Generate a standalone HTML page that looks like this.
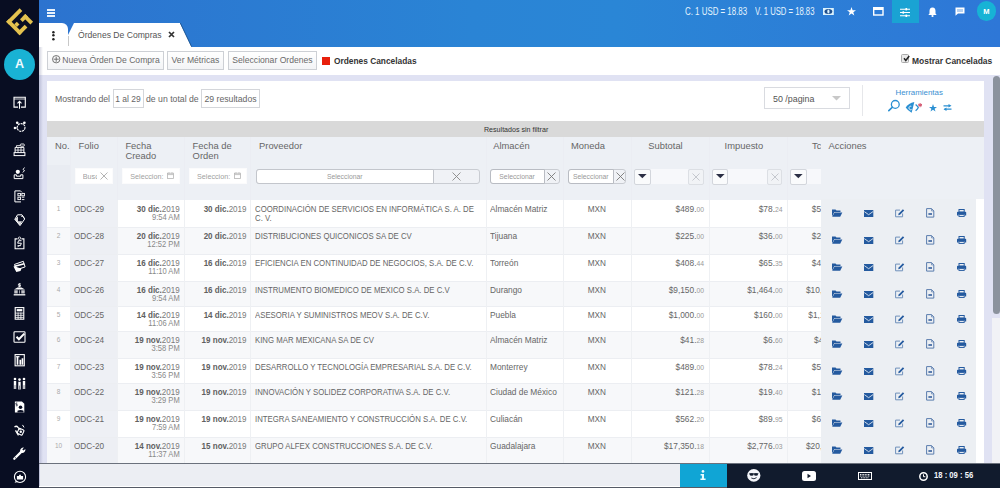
<!DOCTYPE html><html><head><meta charset="utf-8"><style>
*{box-sizing:border-box;margin:0;padding:0}
html,body{width:1000px;height:488px;overflow:hidden}
body{position:relative;background:#e0e2f3;font-family:"Liberation Sans",sans-serif;color:#555}
.a{position:absolute}
.t{position:absolute;white-space:nowrap;line-height:1}
svg{position:absolute;overflow:visible}
.btn{position:absolute;top:51px;height:19px;border:1px solid #cdd0d5;background:linear-gradient(#fff,#f3f4f6);font-size:8.6px;color:#6a6a6a;line-height:17px;white-space:nowrap;text-align:center}
.hd{position:absolute;font-size:9.4px;color:#666;line-height:10px;white-space:nowrap}
.cell{position:absolute;white-space:nowrap;line-height:1}
.pv{font-size:7.8px;color:#666}
.dt{font-size:8px;color:#7a7a7a;text-align:right}
.dt b{font-weight:700;color:#606060}
.tm{font-size:7.3px;color:#888;text-align:right}
.mn{font-size:8.4px;color:#666;text-align:right}
.mn s{text-decoration:none;font-size:8px;color:#999}
.sb{position:absolute;left:0;width:39px;height:23px}
.fi{position:absolute;height:15.5px;background:#fff;border:1px solid #fbfbfc;font-size:7.2px;color:#a0a0a0;line-height:15px;white-space:nowrap;overflow:hidden}
</style></head><body>
<div class="a" style="left:0;top:0;width:39px;height:488px;background:#080d22"></div>
<svg style="left:0;top:0" width="39" height="44" viewBox="0 0 39 44">
<g transform="translate(6.2 21.75) rotate(-45)" fill="#e4c24f">
<rect x="0" y="0" width="19" height="3.8"/>
<rect x="0" y="0" width="3.8" height="19"/>
<rect x="0" y="15.2" width="11" height="3.8"/>
<rect x="3.8" y="7.5" width="3.7" height="3.8"/>
<rect x="11.5" y="8" width="7.5" height="3.8"/>
<rect x="15.2" y="8" width="3.8" height="11"/>
</g></svg>
<div class="a" style="left:4px;top:48.5px;width:31px;height:31px;border-radius:50%;background:#19b2d4"></div>
<div class="t" style="left:4px;top:58.3px;width:31px;text-align:center;font-size:12.6px;font-weight:700;color:#eefaff">A</div>
<svg style="left:0;top:0" width="39" height="488"><g transform="translate(19.5 102.8)"><path d="M-1.5 4.3H-5.5V-5.5H5.8V4.3H1.5" fill="none" stroke="#fff" stroke-width="1.1"/><path d="M-5.5 -3.8H5.8" stroke="#fff" stroke-width="0.8"/><path d="M0 6V-1.3M-2 0.6L0 -1.4L2 0.6" stroke="#fff" stroke-width="1.1" fill="none"/></g></svg>
<svg style="left:0;top:0" width="39" height="488"><g transform="translate(19.5 126.2)"><circle cx="1.6" cy="1.3" r="3.9" fill="none" stroke="#fff" stroke-width="1.1" stroke-dasharray="2.2 0.7"/><circle cx="-2.3" cy="-3.4" r="1.3" fill="#fff"/><circle cx="4.9" cy="-3.4" r="1.3" fill="#fff"/><circle cx="-4.6" cy="1.8" r="1.2" fill="#fff"/><path d="M-2.3 -3.4L-0.8 -2M4.9 -3.4L3.8 -2.1M-4.6 1.8H-2.3" stroke="#fff" stroke-width="0.8"/></g></svg>
<svg style="left:0;top:0" width="39" height="488"><g transform="translate(19.5 149.6)"><rect x="-5.4" y="3" width="10.8" height="3" fill="none" stroke="#fff" stroke-width="1"/><path d="M-4.4 3V-2.2H4.4V3" fill="none" stroke="#fff" stroke-width="1"/><path d="M-1.5 -2.2V3M1.5 -2.2V3M-4.4 0.5H4.4" stroke="#fff" stroke-width="0.8"/><rect x="0.8" y="-5.6" width="4" height="2.2" rx="0.8" fill="none" stroke="#fff" stroke-width="0.9"/><path d="M-3 -2.2V-4H0.8" stroke="#fff" stroke-width="0.8" fill="none"/></g></svg>
<svg style="left:0;top:0" width="39" height="488"><g transform="translate(19.5 173.0)"><circle cx="-1.7" cy="-1.2" r="2.1" fill="#fff"/><path d="M-5.3 1.8V5.6H3.4V1.8H1.2V3.2H-3.1V1.8Z" fill="none" stroke="#fff" stroke-width="1"/><path d="M5 -5.5L3.5 -3.5L5 -2.5L3.3 -0.5" stroke="#fff" stroke-width="0.9" fill="none"/></g></svg>
<svg style="left:0;top:0" width="39" height="488"><g transform="translate(19.5 196.4)"><path d="M1 -5.5H-4.6V5.5H1.5" fill="none" stroke="#fff" stroke-width="1"/><path d="M1 -5.5L2.5 -4" stroke="#fff" stroke-width="0.8"/><rect x="-1.6" y="-3" width="2.6" height="2.4" fill="none" stroke="#fff" stroke-width="0.9"/><rect x="2.3" y="-3" width="2.6" height="2.4" fill="none" stroke="#fff" stroke-width="0.9"/><rect x="-1.6" y="0.8" width="2.6" height="2.4" fill="none" stroke="#fff" stroke-width="0.9"/><path d="M2.3 0.8H4.9M2.3 3.2H4.9" stroke="#fff" stroke-width="0.9"/></g></svg>
<svg style="left:0;top:0" width="39" height="488"><g transform="translate(19.5 219.8)"><path d="M-4.7 -0.5L-2 -5H2.5L5.2 -0.8L0.5 5.8Z" fill="none" stroke="#fff" stroke-width="1"/><path d="M-4.7 -0.5L0.5 5.8L2.5 1.5H-1.5V-3.5Z" fill="#fff" opacity="0.85"/><path d="M1.5 -3.5H3.5L5.2 -0.8" stroke="#fff" stroke-width="0.8" fill="none"/></g></svg>
<svg style="left:0;top:0" width="39" height="488"><g transform="translate(19.5 243.2)"><path d="M-2 -4.3H-4.4V5.6H4.4V-4.3H2" fill="none" stroke="#fff" stroke-width="1.1"/><circle cx="0" cy="-5" r="1.2" fill="none" stroke="#fff" stroke-width="0.8"/><path d="M2 -2.5H-1L-1.8 0H1.8L1 2.5H-2" stroke="#fff" stroke-width="1" fill="none"/><path d="M-2 4L0 2" stroke="#fff" stroke-width="0.8"/></g></svg>
<svg style="left:0;top:0" width="39" height="488"><g transform="translate(19.5 266.6)"><path d="M-5 -2.2L3.8 -5.3L5.6 0.3L-3 3.2Z" fill="none" stroke="#fff" stroke-width="1"/><path d="M-5 -1L4.5 -3.5L5 -2L-4.6 0.5Z" fill="#fff"/><path d="M-6 0L-3.2 5.5L1 4.5L2 2L-1.8 1L-4 -0.5Z" fill="#fff"/></g></svg>
<svg style="left:0;top:0" width="39" height="488"><g transform="translate(19.5 290.0)"><path d="M-5.5 -0.5L-2 -2.5H2L5.5 -0.5Z" fill="#fff"/><path d="M-4.4 0.3V3.5M-2.6 0.3V3.5M2.6 0.3V3.5M4.4 0.3V3.5" stroke="#fff" stroke-width="1.3"/><path d="M-5.8 4.8H5.8" stroke="#fff" stroke-width="1.3"/><path d="M1.2 -6.2H-0.8L-1.3 -4.8H1.1L0.6 -3.3H-1.3M0.2 -6.8V-2.8" stroke="#fff" stroke-width="0.8" fill="none"/><path d="M0 0.3V3.5" stroke="#fff" stroke-width="0.6"/></g></svg>
<svg style="left:0;top:0" width="39" height="488"><g transform="translate(19.5 313.4)"><rect x="-4.3" y="-5.8" width="8.6" height="11.6" fill="none" stroke="#fff" stroke-width="1.1"/><rect x="-2.8" y="-4.3" width="5.6" height="2.2" fill="#fff"/><path d="M-4.3 -0.3H4.3M-4.3 1.9H4.3M-4.3 4H4.3M-1.4 -0.9V5.8M1.4 -0.9V5.8" stroke="#fff" stroke-width="0.8"/></g></svg>
<svg style="left:0;top:0" width="39" height="488"><g transform="translate(19.5 336.8)"><rect x="-5.5" y="-5" width="11" height="10.5" rx="0.8" fill="none" stroke="#fff" stroke-width="1.1"/><path d="M-3 0L-0.6 2.4L4.8 -3.2" stroke="#fff" stroke-width="2" fill="none"/></g></svg>
<svg style="left:0;top:0" width="39" height="488"><g transform="translate(19.5 360.2)"><rect x="-4.4" y="-5.6" width="9.2" height="11.2" fill="none" stroke="#fff" stroke-width="1.1"/><path d="M-2 4.6V-3.5M0.8 4.6V-0.5M3 4.6V-2" stroke="#fff" stroke-width="1.7"/><path d="M-3.4 -3.5H0" stroke="#fff" stroke-width="1.2"/></g></svg>
<svg style="left:0;top:0" width="39" height="488"><g transform="translate(19.5 383.6)"><circle cx="-4.5" cy="-4.6" r="1.3" fill="#fff"/><circle cx="0" cy="-4" r="1.3" fill="#fff"/><circle cx="4.5" cy="-4.6" r="1.3" fill="#fff"/><path d="M-4.5 -2.5V5.5M0 -1.8V6M4.5 -2.5V5.5" stroke="#fff" stroke-width="2.4"/><path d="M-4.5 1.5V5.5M0 2V6M4.5 1.5V5.5" stroke="#080d22" stroke-width="0.5"/></g></svg>
<svg style="left:0;top:0" width="39" height="488"><g transform="translate(19.5 407.0)"><path d="M-4.6 -5.6H2.4L4.8 -3.2V5.6H-4.6Z" fill="#fff"/><circle cx="1" cy="0.3" r="1.8" fill="#080d22"/><path d="M-2 5.6V3.8Q1 2 4 3.8V5.6Z" fill="#080d22"/><path d="M-2.2 -4H-3.6V-2.6H-2.3V-1.2H-3.7" stroke="#080d22" stroke-width="0.7" fill="none"/></g></svg>
<svg style="left:0;top:0" width="39" height="488"><g transform="translate(19.5 430.4)"><path d="M-5 -3.5Q-3 -5 -1.5 -3L1 -0.5" stroke="#fff" stroke-width="1.3" fill="none"/><path d="M-4 0L-1 5" stroke="#fff" stroke-width="1.3"/><rect x="-1.5" y="-1.5" width="5.5" height="5.5" rx="1" fill="none" stroke="#fff" stroke-width="1.1" transform="rotate(25 1 1)"/><circle cx="1.3" cy="1.3" r="1.2" fill="#fff"/><path d="M3 -5.5L4.5 -3" stroke="#fff" stroke-width="1"/></g></svg>
<svg style="left:0;top:0" width="39" height="488"><g transform="translate(19.5 453.8)"><path d="M-5.2 5L2.2 -2.4" stroke="#fff" stroke-width="2.3" stroke-linecap="round"/><path d="M0.6 -2.4A3.4 3.4 0 0 1 4.4 -6.2L2.8 -4.3L3.9 -3.2L5.9 -4.8A3.4 3.4 0 0 1 2.1 -0.9Z" fill="#fff"/><circle cx="-4.2" cy="4" r="0.5" fill="#080d22"/></g></svg>
<svg style="left:0;top:0" width="39" height="488"><g transform="translate(19.5 477.2)"><circle cx="0.5" cy="-0.3" r="5.6" fill="none" stroke="#fff" stroke-width="1.1"/><path d="M-3.4 3.6L-5 5.6L-1.6 4.8" fill="#fff"/><path d="M-2.6 2.2H3.6V-1.2H1.4V-2.4H-0.2L-0.6 -1.2H-2.6Z" fill="#fff"/></g></svg>
<div class="a" style="left:39px;top:0;width:961px;height:46.7px;background:linear-gradient(90deg,#2c73cf 0%,#2a84d5 45%,#2a86d6 60%,#2e77d7 100%)"></div>
<div class="a" style="left:47px;top:9px;width:8px;height:1.6px;background:#e8f1fb"></div>
<div class="a" style="left:47px;top:12px;width:8px;height:1.6px;background:#e8f1fb"></div>
<div class="a" style="left:47px;top:15px;width:8px;height:1.6px;background:#e8f1fb"></div>
<div class="a" style="left:39px;top:23px;width:29px;height:24px;background:#fff;border-top-right-radius:6px"></div>
<svg style="left:51.5px;top:31.2px" width="3" height="3"><circle cx="1.4" cy="1.2" r="1.25" fill="#222"/></svg>
<svg style="left:51.5px;top:34.4px" width="3" height="3"><circle cx="1.4" cy="1.2" r="1.25" fill="#222"/></svg>
<svg style="left:51.5px;top:37.6px" width="3" height="3"><circle cx="1.4" cy="1.2" r="1.25" fill="#222"/></svg>
<svg style="left:0;top:0" width="1000" height="50"><polygon points="68,47 68,35 74,23 180,23 191.5,47" fill="#fff"/><line x1="180.3" y1="23" x2="191.6" y2="46.7" stroke="#1d548f" stroke-width="0.9"/><line x1="68.5" y1="36" x2="68.5" y2="46" stroke="#c8c8c8" stroke-width="1"/></svg>
<div class="t" style="left:78px;top:30.6px;font-size:8.6px;color:#555">Órdenes De Compras</div>
<svg style="left:168px;top:31px" width="7" height="7"><path d="M1 1L6 6M6 1L1 6" stroke="#333" stroke-width="1.7"/></svg>
<div class="t" style="left:685px;top:7.2px;font-size:10px;color:#e6f4fd;transform:scaleX(0.79);transform-origin:0 0">C. 1 USD = 18.83</div>
<div class="t" style="left:755px;top:7.2px;font-size:10px;color:#e6f4fd;transform:scaleX(0.77);transform-origin:0 0">V. 1 USD = 18.83</div>
<svg style="left:823.4px;top:7.8px" width="11" height="7"><rect x="0" y="0" width="10.8" height="7" fill="#dcf3fd"/><ellipse cx="5.4" cy="3.5" rx="3.9" ry="2.5" fill="#1f4f8e"/><ellipse cx="5.4" cy="3.5" rx="1.1" ry="2" fill="#dcf3fd"/></svg>
<svg style="left:846.5px;top:7px" width="9" height="9"><path d="M4.5 0L5.6 3.2H9L6.3 5.2L7.3 8.5L4.5 6.5L1.7 8.5L2.7 5.2L0 3.2H3.4Z" fill="#fff"/></svg>
<svg style="left:872.6px;top:6.6px" width="11" height="9"><rect x="0.7" y="0.7" width="9.3" height="7.3" fill="none" stroke="#fff" stroke-width="1.4"/><rect x="0.7" y="0.7" width="9.3" height="2.3" fill="#fff"/></svg>
<div class="a" style="left:892px;top:0;width:27px;height:23px;background:#1aa3d3"></div>
<svg style="left:900px;top:7.5px" width="10" height="9"><path d="M0 1.2H10M0 4.5H10M0 7.8H10" stroke="#fff" stroke-width="1.1"/><rect x="5.5" y="0" width="1.6" height="2.4" fill="#fff"/><rect x="2.5" y="3.3" width="1.6" height="2.4" fill="#fff"/><rect x="5.5" y="6.6" width="1.6" height="2.4" fill="#fff"/></svg>
<svg style="left:927.5px;top:6.5px" width="9" height="10"><path d="M4.5 0.5C2.3 0.5 1.5 2.3 1.5 4V6.5L0.3 8H8.7L7.5 6.5V4C7.5 2.3 6.7 0.5 4.5 0.5Z" fill="#fff"/><circle cx="4.5" cy="9" r="1.1" fill="#fff"/></svg>
<svg style="left:954.5px;top:7px" width="10" height="9"><path d="M0.5 0.5H9.5V6.5H3L0.5 8.7Z" fill="#fff"/><rect x="2" y="2" width="6" height="3" fill="#2e7ad6" opacity="0.35"/></svg>
<div class="a" style="left:976.5px;top:1.3px;width:19.6px;height:19.6px;border-radius:50%;background:#17b3d5"></div>
<div class="t" style="left:976.5px;top:7.6px;width:19.6px;text-align:center;font-size:7.5px;font-weight:700;color:#fff">M</div>
<div class="a" style="left:39px;top:46.7px;width:961px;height:28.3px;background:#fff"></div>
<div class="btn" style="left:47px;width:117px;padding-left:11px">Nueva Órden De Compra</div>
<svg style="left:51.8px;top:54.6px" width="9" height="9"><circle cx="4.2" cy="4.2" r="3.7" fill="none" stroke="#666" stroke-width="0.9"/><path d="M4.2 1.6V6.8M1.6 4.2H6.8" stroke="#666" stroke-width="0.9"/></svg>
<div class="btn" style="left:167px;width:57px">Ver Métricas</div>
<div class="btn" style="left:228px;width:89px">Seleccionar Ordenes</div>
<div class="a" style="left:321.5px;top:56.5px;width:8px;height:8px;background:#e8200c"></div>
<div class="t" style="left:334px;top:57.3px;font-size:8.35px;font-weight:700;color:#333">Ordenes Canceladas</div>
<div class="a" style="left:901.3px;top:54.2px;width:8.2px;height:8.4px;border:1px solid #aaa;border-radius:1.5px;background:#e9e9e9"></div>
<svg style="left:902.5px;top:55px" width="7" height="7"><path d="M1 3.3L2.8 5.5L6.2 1" stroke="#222" stroke-width="1.5" fill="none"/></svg>
<div class="t" style="left:912px;top:56.9px;font-size:8.45px;font-weight:700;color:#333">Mostrar Canceladas</div>
<div class="a" style="left:47px;top:81px;width:937px;height:383px;background:#fff"></div>
<div class="t" style="left:55px;top:95px;font-size:8.7px;color:#666">Mostrando del</div>
<div class="a" style="left:112.5px;top:89px;width:31px;height:19px;border:1px solid #d4d6da;font-size:8.5px;color:#666;line-height:19px;text-align:center">1 al 29</div>
<div class="t" style="left:146px;top:95px;font-size:8.7px;color:#666">de un total de</div>
<div class="a" style="left:201px;top:89px;width:59px;height:19px;border:1px solid #d4d6da;font-size:8.7px;color:#666;line-height:19px;text-align:center">29 resultados</div>
<div class="a" style="left:764px;top:87px;width:86px;height:22px;border:1px solid #d9dbe0;font-size:8.9px;color:#555;line-height:22px;padding-left:8px">50 /pagina</div>
<svg style="left:832px;top:95.5px" width="9" height="5"><path d="M0 0H9L4.5 4.5Z" fill="#c8c8c8"/></svg>
<div class="a" style="left:862px;top:85px;width:1px;height:31px;background:#e6e7ea"></div>
<div class="t" style="left:895.5px;top:88.8px;font-size:7.9px;color:#3b8fd2">Herramientas</div>
<svg style="left:886px;top:99px" width="16" height="13"><circle cx="9.3" cy="5.4" r="3.9" fill="none" stroke="#2a8fd2" stroke-width="1.3"/><path d="M6.5 8.2L2.8 11.6" stroke="#2a8fd2" stroke-width="1.6" stroke-linecap="round"/></svg>
<svg style="left:905px;top:101px" width="18" height="13"><path d="M9.3 1Q3.5 2.2 0.7 6.6Q3 10 6.6 11.7Z" fill="#2a8fd2"/><path d="M6.3 5.3A1.8 1.8 0 1 0 6.6 8.6" stroke="#fff" stroke-width="0.9" fill="none"/><path d="M10.6 3.4Q12.6 5 13.3 6.6Q12.6 8.2 10.6 9.8" stroke="#2a8fd2" stroke-width="1.3" fill="none"/></svg>
<svg style="left:918px;top:102.6px" width="5" height="5"><path d="M2.1 0V4.2M0.2 1.2L4 3M4 1.2L0.2 3" stroke="#d2506a" stroke-width="1"/></svg>
<svg style="left:928.5px;top:104px" width="8" height="8"><path d="M4 0L5 2.9H8L5.6 4.7L6.5 7.6L4 5.8L1.5 7.6L2.4 4.7L0 2.9H3Z" fill="#2a8fd2"/></svg>
<svg style="left:943px;top:104px" width="9" height="7"><path d="M0.5 1.8H6.5M1.5 5.2H8.5" stroke="#2a8fd2" stroke-width="1.2"/><path d="M5.5 0L8.5 1.8L5.5 3.6Z M3.5 3.4L0.5 5.2L3.5 7Z" fill="#2a8fd2"/></svg>
<div class="a" style="left:992.5px;top:76px;width:7.5px;height:238px;border-radius:4px;background:#8b929d"></div>
<div class="a" style="left:992px;top:318px;width:8px;height:146px;background:#f1f2f6"></div>
<div class="a" style="left:39px;top:46.7px;width:4px;height:441px;background:linear-gradient(90deg,rgba(90,95,140,0.28),rgba(90,95,140,0))"></div>
<div class="a" style="left:47px;top:121px;width:937px;height:16px;background:#d9d9d9"></div>
<div class="t" style="left:484px;top:126.8px;font-size:7.1px;color:#333">Resultados sin filtrar</div>
<div class="a" style="left:47px;top:137px;width:937px;height:63px;background:#edf0f5"></div>
<div class="a" style="left:70px;top:137px;width:1px;height:63px;background:#ebedf3"></div>
<div class="a" style="left:117px;top:137px;width:1px;height:63px;background:#ebedf3"></div>
<div class="a" style="left:184px;top:137px;width:1px;height:63px;background:#ebedf3"></div>
<div class="a" style="left:250px;top:137px;width:1px;height:63px;background:#ebedf3"></div>
<div class="a" style="left:485.5px;top:137px;width:1px;height:63px;background:#ebedf3"></div>
<div class="a" style="left:563px;top:137px;width:1px;height:63px;background:#ebedf3"></div>
<div class="a" style="left:630.5px;top:137px;width:1px;height:63px;background:#ebedf3"></div>
<div class="a" style="left:708.5px;top:137px;width:1px;height:63px;background:#ebedf3"></div>
<div class="a" style="left:786.5px;top:137px;width:1px;height:63px;background:#ebedf3"></div>
<div class="a" style="left:47px;top:165px;width:23px;height:35px;background:#e9ecf2"></div>
<div class="hd" style="left:55px;top:140.8px">No.</div>
<div class="hd" style="left:78.6px;top:140.8px">Folio</div>
<div class="hd" style="left:125.4px;top:140.8px">Fecha<br>Creado</div>
<div class="hd" style="left:192.6px;top:140.8px">Fecha de<br>Orden</div>
<div class="hd" style="left:259px;top:140.8px">Proveedor</div>
<div class="hd" style="left:493.2px;top:140.8px">Almacén</div>
<div class="hd" style="left:571px;top:140.8px">Moneda</div>
<div class="hd" style="left:648.3px;top:140.8px">Subtotal</div>
<div class="hd" style="left:724.6px;top:140.8px">Impuesto</div>
<div class="hd" style="left:812px;top:140.8px">Tc</div>
<div class="hd" style="left:828.5px;top:140.8px">Acciones</div>
<div class="fi" style="left:74.8px;top:168.4px;width:38px;padding-left:7px"><span style="display:inline-block;width:14.5px;overflow:hidden;vertical-align:top">Busc</span></div>
<svg style="left:100px;top:172px" width="8" height="8"><path d="M0.5 0.5L7.5 7.5M7.5 0.5L0.5 7.5" stroke="#aaa" stroke-width="0.9"/></svg>
<div class="fi" style="left:121.8px;top:168.4px;width:58.5px;padding-left:7.5px">Seleccion:</div>
<svg style="left:167.3px;top:172.3px" width="7" height="7"><rect x="0.5" y="1.2" width="6" height="5.3" fill="none" stroke="#b5b5b5" stroke-width="0.8"/><path d="M0.5 2.6H6.5M2 0.2V1.6M5 0.2V1.6" stroke="#b5b5b5" stroke-width="0.8"/></svg>
<div class="fi" style="left:188.5px;top:168.4px;width:58.5px;padding-left:7.5px">Seleccion:</div>
<svg style="left:234.0px;top:172.3px" width="7" height="7"><rect x="0.5" y="1.2" width="6" height="5.3" fill="none" stroke="#b5b5b5" stroke-width="0.8"/><path d="M0.5 2.6H6.5M2 0.2V1.6M5 0.2V1.6" stroke="#b5b5b5" stroke-width="0.8"/></svg>
<div class="a" style="left:255.5px;top:168.5px;width:224.5px;height:15px;border:1px solid #c9ccd2;border-radius:3px;background:#f0f2f6"></div>
<div class="a" style="left:255.5px;top:168.5px;width:178.5px;height:15px;border:1px solid #c3c6cc;border-radius:3px 0 0 3px;background:#fff;font-size:6.8px;color:#999;line-height:13px;text-align:center">Seleccionar</div>
<svg style="left:452px;top:171.5px" width="9" height="9"><path d="M0.5 0.5L8.5 8.5M8.5 0.5L0.5 8.5" stroke="#888" stroke-width="0.9"/></svg>
<div class="a" style="left:489.6px;top:168.5px;width:70px;height:15px;border:1px solid #c9ccd2;border-radius:3px;background:#f0f2f6"></div>
<div class="a" style="left:489.6px;top:168.5px;width:55px;height:15px;border:1px solid #b9bcc3;border-radius:3px 0 0 3px;background:#fff;font-size:6.8px;color:#999;line-height:13px;text-align:center;overflow:hidden">Seleccionar</div>
<svg style="left:547.1px;top:171.5px" width="9" height="9"><path d="M0.5 0.5L8.5 8.5M8.5 0.5L0.5 8.5" stroke="#777" stroke-width="0.9"/></svg>
<div class="a" style="left:568px;top:168.5px;width:58.0px;height:15px;border:1px solid #c9ccd2;border-radius:3px;background:#f0f2f6"></div>
<div class="a" style="left:568px;top:168.5px;width:45.5px;height:15px;border:1px solid #b9bcc3;border-radius:3px 0 0 3px;background:#fff;font-size:6.8px;color:#999;line-height:13px;text-align:center;overflow:hidden">Seleccionar</div>
<svg style="left:616.0px;top:171.5px" width="9" height="9"><path d="M0.5 0.5L8.5 8.5M8.5 0.5L0.5 8.5" stroke="#777" stroke-width="0.9"/></svg>
<div class="a" style="left:650.5px;top:169px;width:37.5px;height:15px;background:#f7f8fb"></div>
<div class="a" style="left:634px;top:168.5px;width:16.5px;height:16px;border:1px solid #d3d6dc;border-radius:2px;background:#fafbfc"></div>
<svg style="left:638.2px;top:174.2px" width="9" height="5"><path d="M0 0H8.6L4.3 4.2Z" fill="#2b2f45"/></svg>
<div class="a" style="left:688px;top:168.5px;width:15.5px;height:16px;border:1px solid #dcdfe4;border-radius:2px;background:#f1f3f6"></div>
<svg style="left:692px;top:172.5px" width="8" height="8"><path d="M0.5 0.5L7.5 7.5M7.5 0.5L0.5 7.5" stroke="#c5c8ce" stroke-width="1"/></svg>
<div class="a" style="left:728.4px;top:169px;width:38.200000000000045px;height:15px;background:#f7f8fb"></div>
<div class="a" style="left:711.9px;top:168.5px;width:16.5px;height:16px;border:1px solid #d3d6dc;border-radius:2px;background:#fafbfc"></div>
<svg style="left:716.1px;top:174.2px" width="9" height="5"><path d="M0 0H8.6L4.3 4.2Z" fill="#2b2f45"/></svg>
<div class="a" style="left:766.6px;top:168.5px;width:15.5px;height:16px;border:1px solid #dcdfe4;border-radius:2px;background:#f1f3f6"></div>
<svg style="left:770.6px;top:172.5px" width="8" height="8"><path d="M0.5 0.5L7.5 7.5M7.5 0.5L0.5 7.5" stroke="#c5c8ce" stroke-width="1"/></svg>
<div class="a" style="left:806.5px;top:169px;width:30px;height:15px;background:#f7f8fb"></div>
<div class="a" style="left:790px;top:168.5px;width:16.5px;height:16px;border:1px solid #d3d6dc;border-radius:2px;background:#fafbfc"></div>
<svg style="left:794.2px;top:174.2px" width="9" height="5"><path d="M0 0H8.6L4.3 4.2Z" fill="#2b2f45"/></svg>
<div class="a" style="left:47px;top:200px;width:937px;height:263px;background:#fff"></div>
<div class="a" style="left:70px;top:200px;width:47px;height:263px;background:#eef0f5"></div>
<div class="cell" style="left:47px;top:206px;width:23px;text-align:center;font-size:6.5px;color:#aaa">1</div>
<div class="cell" style="left:74.4px;top:203.79px;font-size:9.7px;color:#666;transform:scaleX(0.845);transform-origin:0 0">ODC-29</div>
<div class="cell dt" style="left:117px;top:203.56px;width:62.7px;font-size:9.5px;transform:scaleX(0.845);transform-origin:100% 0"><b>30 dic.</b>2019</div>
<div class="cell tm" style="left:117px;top:213.02px;width:62.7px;font-size:8.6px;transform:scaleX(0.88);transform-origin:100% 0">9:54 AM</div>
<div class="cell dt" style="left:184px;top:203.56px;width:62.5px;font-size:9.5px;transform:scaleX(0.845);transform-origin:100% 0"><b>30 dic.</b>2019</div>
<div class="cell pv" style="left:255px;top:204.71px;line-height:8.8px;font-size:9.2px;transform:scaleX(0.848);transform-origin:0 0">COORDINACIÓN DE SERVICIOS EN INFORMÁTICA S. A. DE<br>C. V.</div>
<div class="cell" style="left:489.5px;top:203.62px;font-size:9.9px;color:#666;transform:scaleX(0.845);transform-origin:0 0">Almacén Matriz</div>
<div class="cell" style="left:563px;top:203.79px;width:67.5px;text-align:center;font-size:9.7px;color:#666;transform:scaleX(0.845);transform-origin:50% 0">MXN</div>
<div class="cell mn" style="left:630.5px;top:203.62px;width:73px;font-size:9.9px;transform:scaleX(0.845);transform-origin:100% 0">$489.<s>00</s></div>
<div class="cell mn" style="left:708.5px;top:203.62px;width:73.5px;font-size:9.9px;transform:scaleX(0.845);transform-origin:100% 0">$78.<s>24</s></div>
<div class="cell mn" style="left:786.5px;top:203.62px;width:78px;text-align:center;font-size:9.9px;transform:scaleX(0.845);transform-origin:50% 0">$567.<s>24</s></div>
<div class="a" style="left:47px;top:227px;width:774px;height:27px;background:#f7f8fa"></div>
<div class="a" style="left:70px;top:227px;width:47px;height:27px;background:#edeff4"></div>
<div class="cell" style="left:47px;top:233px;width:23px;text-align:center;font-size:6.5px;color:#aaa">2</div>
<div class="cell" style="left:74.4px;top:230.79px;font-size:9.7px;color:#666;transform:scaleX(0.845);transform-origin:0 0">ODC-28</div>
<div class="cell dt" style="left:117px;top:230.56px;width:62.7px;font-size:9.5px;transform:scaleX(0.845);transform-origin:100% 0"><b>20 dic.</b>2019</div>
<div class="cell tm" style="left:117px;top:240.02px;width:62.7px;font-size:8.6px;transform:scaleX(0.88);transform-origin:100% 0">12:52 PM</div>
<div class="cell dt" style="left:184px;top:230.56px;width:62.5px;font-size:9.5px;transform:scaleX(0.845);transform-origin:100% 0"><b>20 dic.</b>2019</div>
<div class="cell pv" style="left:255px;top:231.71px;line-height:8.8px;font-size:9.2px;transform:scaleX(0.848);transform-origin:0 0">DISTRIBUCIONES QUICONICOS SA DE CV</div>
<div class="cell" style="left:489.5px;top:230.62px;font-size:9.9px;color:#666;transform:scaleX(0.845);transform-origin:0 0">Tijuana</div>
<div class="cell" style="left:563px;top:230.79px;width:67.5px;text-align:center;font-size:9.7px;color:#666;transform:scaleX(0.845);transform-origin:50% 0">MXN</div>
<div class="cell mn" style="left:630.5px;top:230.62px;width:73px;font-size:9.9px;transform:scaleX(0.845);transform-origin:100% 0">$225.<s>00</s></div>
<div class="cell mn" style="left:708.5px;top:230.62px;width:73.5px;font-size:9.9px;transform:scaleX(0.845);transform-origin:100% 0">$36.<s>00</s></div>
<div class="cell mn" style="left:786.5px;top:230.62px;width:78px;text-align:center;font-size:9.9px;transform:scaleX(0.845);transform-origin:50% 0">$261.<s>00</s></div>
<div class="cell" style="left:47px;top:260px;width:23px;text-align:center;font-size:6.5px;color:#aaa">3</div>
<div class="cell" style="left:74.4px;top:257.79px;font-size:9.7px;color:#666;transform:scaleX(0.845);transform-origin:0 0">ODC-27</div>
<div class="cell dt" style="left:117px;top:257.56px;width:62.7px;font-size:9.5px;transform:scaleX(0.845);transform-origin:100% 0"><b>16 dic.</b>2019</div>
<div class="cell tm" style="left:117px;top:267.02px;width:62.7px;font-size:8.6px;transform:scaleX(0.88);transform-origin:100% 0">11:10 AM</div>
<div class="cell dt" style="left:184px;top:257.56px;width:62.5px;font-size:9.5px;transform:scaleX(0.845);transform-origin:100% 0"><b>16 dic.</b>2019</div>
<div class="cell pv" style="left:255px;top:258.71px;line-height:8.8px;font-size:9.2px;transform:scaleX(0.848);transform-origin:0 0">EFICIENCIA EN CONTINUIDAD DE NEGOCIOS, S.A. DE C.V.</div>
<div class="cell" style="left:489.5px;top:257.62px;font-size:9.9px;color:#666;transform:scaleX(0.845);transform-origin:0 0">Torreón</div>
<div class="cell" style="left:563px;top:257.79px;width:67.5px;text-align:center;font-size:9.7px;color:#666;transform:scaleX(0.845);transform-origin:50% 0">MXN</div>
<div class="cell mn" style="left:630.5px;top:257.62px;width:73px;font-size:9.9px;transform:scaleX(0.845);transform-origin:100% 0">$408.<s>44</s></div>
<div class="cell mn" style="left:708.5px;top:257.62px;width:73.5px;font-size:9.9px;transform:scaleX(0.845);transform-origin:100% 0">$65.<s>35</s></div>
<div class="cell mn" style="left:786.5px;top:257.62px;width:78px;text-align:center;font-size:9.9px;transform:scaleX(0.845);transform-origin:50% 0">$473.<s>79</s></div>
<div class="a" style="left:47px;top:281px;width:774px;height:25px;background:#f7f8fa"></div>
<div class="a" style="left:70px;top:281px;width:47px;height:25px;background:#edeff4"></div>
<div class="cell" style="left:47px;top:287px;width:23px;text-align:center;font-size:6.5px;color:#aaa">4</div>
<div class="cell" style="left:74.4px;top:284.79px;font-size:9.7px;color:#666;transform:scaleX(0.845);transform-origin:0 0">ODC-26</div>
<div class="cell dt" style="left:117px;top:284.56px;width:62.7px;font-size:9.5px;transform:scaleX(0.845);transform-origin:100% 0"><b>16 dic.</b>2019</div>
<div class="cell tm" style="left:117px;top:294.02px;width:62.7px;font-size:8.6px;transform:scaleX(0.88);transform-origin:100% 0">9:54 AM</div>
<div class="cell dt" style="left:184px;top:284.56px;width:62.5px;font-size:9.5px;transform:scaleX(0.845);transform-origin:100% 0"><b>16 dic.</b>2019</div>
<div class="cell pv" style="left:255px;top:285.71px;line-height:8.8px;font-size:9.2px;transform:scaleX(0.848);transform-origin:0 0">INSTRUMENTO BIOMEDICO DE MEXICO S.A. DE C.V</div>
<div class="cell" style="left:489.5px;top:284.62px;font-size:9.9px;color:#666;transform:scaleX(0.845);transform-origin:0 0">Durango</div>
<div class="cell" style="left:563px;top:284.79px;width:67.5px;text-align:center;font-size:9.7px;color:#666;transform:scaleX(0.845);transform-origin:50% 0">MXN</div>
<div class="cell mn" style="left:630.5px;top:284.62px;width:73px;font-size:9.9px;transform:scaleX(0.845);transform-origin:100% 0">$9,150.<s>00</s></div>
<div class="cell mn" style="left:708.5px;top:284.62px;width:73.5px;font-size:9.9px;transform:scaleX(0.845);transform-origin:100% 0">$1,464.<s>00</s></div>
<div class="cell mn" style="left:786.5px;top:284.62px;width:78px;text-align:center;font-size:9.9px;transform:scaleX(0.845);transform-origin:50% 0">$10,614.<s>00</s></div>
<div class="cell" style="left:47px;top:312px;width:23px;text-align:center;font-size:6.5px;color:#aaa">5</div>
<div class="cell" style="left:74.4px;top:309.79px;font-size:9.7px;color:#666;transform:scaleX(0.845);transform-origin:0 0">ODC-25</div>
<div class="cell dt" style="left:117px;top:309.56px;width:62.7px;font-size:9.5px;transform:scaleX(0.845);transform-origin:100% 0"><b>14 dic.</b>2019</div>
<div class="cell tm" style="left:117px;top:319.02px;width:62.7px;font-size:8.6px;transform:scaleX(0.88);transform-origin:100% 0">11:06 AM</div>
<div class="cell dt" style="left:184px;top:309.56px;width:62.5px;font-size:9.5px;transform:scaleX(0.845);transform-origin:100% 0"><b>14 dic.</b>2019</div>
<div class="cell pv" style="left:255px;top:310.71px;line-height:8.8px;font-size:9.2px;transform:scaleX(0.848);transform-origin:0 0">ASESORIA Y SUMINISTROS MEOV S.A. DE C.V.</div>
<div class="cell" style="left:489.5px;top:309.62px;font-size:9.9px;color:#666;transform:scaleX(0.845);transform-origin:0 0">Puebla</div>
<div class="cell" style="left:563px;top:309.79px;width:67.5px;text-align:center;font-size:9.7px;color:#666;transform:scaleX(0.845);transform-origin:50% 0">MXN</div>
<div class="cell mn" style="left:630.5px;top:309.62px;width:73px;font-size:9.9px;transform:scaleX(0.845);transform-origin:100% 0">$1,000.<s>00</s></div>
<div class="cell mn" style="left:708.5px;top:309.62px;width:73.5px;font-size:9.9px;transform:scaleX(0.845);transform-origin:100% 0">$160.<s>00</s></div>
<div class="cell mn" style="left:786.5px;top:309.62px;width:78px;text-align:center;font-size:9.9px;transform:scaleX(0.845);transform-origin:50% 0">$1,160.<s>00</s></div>
<div class="a" style="left:47px;top:331px;width:774px;height:27px;background:#f7f8fa"></div>
<div class="a" style="left:70px;top:331px;width:47px;height:27px;background:#edeff4"></div>
<div class="cell" style="left:47px;top:337px;width:23px;text-align:center;font-size:6.5px;color:#aaa">6</div>
<div class="cell" style="left:74.4px;top:334.79px;font-size:9.7px;color:#666;transform:scaleX(0.845);transform-origin:0 0">ODC-24</div>
<div class="cell dt" style="left:117px;top:334.56px;width:62.7px;font-size:9.5px;transform:scaleX(0.845);transform-origin:100% 0"><b>19 nov.</b>2019</div>
<div class="cell tm" style="left:117px;top:344.02px;width:62.7px;font-size:8.6px;transform:scaleX(0.88);transform-origin:100% 0">3:58 PM</div>
<div class="cell dt" style="left:184px;top:334.56px;width:62.5px;font-size:9.5px;transform:scaleX(0.845);transform-origin:100% 0"><b>19 nov.</b>2019</div>
<div class="cell pv" style="left:255px;top:335.71px;line-height:8.8px;font-size:9.2px;transform:scaleX(0.848);transform-origin:0 0">KING MAR MEXICANA SA DE CV</div>
<div class="cell" style="left:489.5px;top:334.62px;font-size:9.9px;color:#666;transform:scaleX(0.845);transform-origin:0 0">Almacén Matriz</div>
<div class="cell" style="left:563px;top:334.79px;width:67.5px;text-align:center;font-size:9.7px;color:#666;transform:scaleX(0.845);transform-origin:50% 0">MXN</div>
<div class="cell mn" style="left:630.5px;top:334.62px;width:73px;font-size:9.9px;transform:scaleX(0.845);transform-origin:100% 0">$41.<s>28</s></div>
<div class="cell mn" style="left:708.5px;top:334.62px;width:73.5px;font-size:9.9px;transform:scaleX(0.845);transform-origin:100% 0">$6.<s>60</s></div>
<div class="cell mn" style="left:786.5px;top:334.62px;width:78px;text-align:center;font-size:9.9px;transform:scaleX(0.845);transform-origin:50% 0">$47.<s>88</s></div>
<div class="cell" style="left:47px;top:364px;width:23px;text-align:center;font-size:6.5px;color:#aaa">7</div>
<div class="cell" style="left:74.4px;top:361.79px;font-size:9.7px;color:#666;transform:scaleX(0.845);transform-origin:0 0">ODC-23</div>
<div class="cell dt" style="left:117px;top:361.56px;width:62.7px;font-size:9.5px;transform:scaleX(0.845);transform-origin:100% 0"><b>19 nov.</b>2019</div>
<div class="cell tm" style="left:117px;top:371.02px;width:62.7px;font-size:8.6px;transform:scaleX(0.88);transform-origin:100% 0">3:56 PM</div>
<div class="cell dt" style="left:184px;top:361.56px;width:62.5px;font-size:9.5px;transform:scaleX(0.845);transform-origin:100% 0"><b>19 nov.</b>2019</div>
<div class="cell pv" style="left:255px;top:362.71px;line-height:8.8px;font-size:9.2px;transform:scaleX(0.848);transform-origin:0 0">DESARROLLO Y TECNOLOGÍA EMPRESARIAL S.A. DE C.V.</div>
<div class="cell" style="left:489.5px;top:361.62px;font-size:9.9px;color:#666;transform:scaleX(0.845);transform-origin:0 0">Monterrey</div>
<div class="cell" style="left:563px;top:361.79px;width:67.5px;text-align:center;font-size:9.7px;color:#666;transform:scaleX(0.845);transform-origin:50% 0">MXN</div>
<div class="cell mn" style="left:630.5px;top:361.62px;width:73px;font-size:9.9px;transform:scaleX(0.845);transform-origin:100% 0">$489.<s>00</s></div>
<div class="cell mn" style="left:708.5px;top:361.62px;width:73.5px;font-size:9.9px;transform:scaleX(0.845);transform-origin:100% 0">$78.<s>24</s></div>
<div class="cell mn" style="left:786.5px;top:361.62px;width:78px;text-align:center;font-size:9.9px;transform:scaleX(0.845);transform-origin:50% 0">$567.<s>24</s></div>
<div class="a" style="left:47px;top:383px;width:774px;height:27px;background:#f7f8fa"></div>
<div class="a" style="left:70px;top:383px;width:47px;height:27px;background:#edeff4"></div>
<div class="cell" style="left:47px;top:389px;width:23px;text-align:center;font-size:6.5px;color:#aaa">8</div>
<div class="cell" style="left:74.4px;top:386.79px;font-size:9.7px;color:#666;transform:scaleX(0.845);transform-origin:0 0">ODC-22</div>
<div class="cell dt" style="left:117px;top:386.56px;width:62.7px;font-size:9.5px;transform:scaleX(0.845);transform-origin:100% 0"><b>19 nov.</b>2019</div>
<div class="cell tm" style="left:117px;top:396.02px;width:62.7px;font-size:8.6px;transform:scaleX(0.88);transform-origin:100% 0">3:29 PM</div>
<div class="cell dt" style="left:184px;top:386.56px;width:62.5px;font-size:9.5px;transform:scaleX(0.845);transform-origin:100% 0"><b>19 nov.</b>2019</div>
<div class="cell pv" style="left:255px;top:387.71px;line-height:8.8px;font-size:9.2px;transform:scaleX(0.848);transform-origin:0 0">INNOVACIÓN Y SOLIDEZ CORPORATIVA S.A. DE C.V.</div>
<div class="cell" style="left:489.5px;top:386.62px;font-size:9.9px;color:#666;transform:scaleX(0.845);transform-origin:0 0">Ciudad de México</div>
<div class="cell" style="left:563px;top:386.79px;width:67.5px;text-align:center;font-size:9.7px;color:#666;transform:scaleX(0.845);transform-origin:50% 0">MXN</div>
<div class="cell mn" style="left:630.5px;top:386.62px;width:73px;font-size:9.9px;transform:scaleX(0.845);transform-origin:100% 0">$121.<s>28</s></div>
<div class="cell mn" style="left:708.5px;top:386.62px;width:73.5px;font-size:9.9px;transform:scaleX(0.845);transform-origin:100% 0">$19.<s>40</s></div>
<div class="cell mn" style="left:786.5px;top:386.62px;width:78px;text-align:center;font-size:9.9px;transform:scaleX(0.845);transform-origin:50% 0">$140.<s>68</s></div>
<div class="cell" style="left:47px;top:416px;width:23px;text-align:center;font-size:6.5px;color:#aaa">9</div>
<div class="cell" style="left:74.4px;top:413.79px;font-size:9.7px;color:#666;transform:scaleX(0.845);transform-origin:0 0">ODC-21</div>
<div class="cell dt" style="left:117px;top:413.56px;width:62.7px;font-size:9.5px;transform:scaleX(0.845);transform-origin:100% 0"><b>19 nov.</b>2019</div>
<div class="cell tm" style="left:117px;top:423.02px;width:62.7px;font-size:8.6px;transform:scaleX(0.88);transform-origin:100% 0">7:59 AM</div>
<div class="cell dt" style="left:184px;top:413.56px;width:62.5px;font-size:9.5px;transform:scaleX(0.845);transform-origin:100% 0"><b>19 nov.</b>2019</div>
<div class="cell pv" style="left:255px;top:414.71px;line-height:8.8px;font-size:9.2px;transform:scaleX(0.848);transform-origin:0 0">INTEGRA SANEAMIENTO Y CONSTRUCCIÓN S.A. DE C.V.</div>
<div class="cell" style="left:489.5px;top:413.62px;font-size:9.9px;color:#666;transform:scaleX(0.845);transform-origin:0 0">Culiacán</div>
<div class="cell" style="left:563px;top:413.79px;width:67.5px;text-align:center;font-size:9.7px;color:#666;transform:scaleX(0.845);transform-origin:50% 0">MXN</div>
<div class="cell mn" style="left:630.5px;top:413.62px;width:73px;font-size:9.9px;transform:scaleX(0.845);transform-origin:100% 0">$562.<s>20</s></div>
<div class="cell mn" style="left:708.5px;top:413.62px;width:73.5px;font-size:9.9px;transform:scaleX(0.845);transform-origin:100% 0">$89.<s>95</s></div>
<div class="cell mn" style="left:786.5px;top:413.62px;width:78px;text-align:center;font-size:9.9px;transform:scaleX(0.845);transform-origin:50% 0">$652.<s>15</s></div>
<div class="a" style="left:47px;top:437px;width:774px;height:26px;background:#f7f8fa"></div>
<div class="a" style="left:70px;top:437px;width:47px;height:26px;background:#edeff4"></div>
<div class="cell" style="left:47px;top:443px;width:23px;text-align:center;font-size:6.5px;color:#aaa">10</div>
<div class="cell" style="left:74.4px;top:440.79px;font-size:9.7px;color:#666;transform:scaleX(0.845);transform-origin:0 0">ODC-20</div>
<div class="cell dt" style="left:117px;top:440.56px;width:62.7px;font-size:9.5px;transform:scaleX(0.845);transform-origin:100% 0"><b>14 nov.</b>2019</div>
<div class="cell tm" style="left:117px;top:450.02px;width:62.7px;font-size:8.6px;transform:scaleX(0.88);transform-origin:100% 0">11:37 AM</div>
<div class="cell dt" style="left:184px;top:440.56px;width:62.5px;font-size:9.5px;transform:scaleX(0.845);transform-origin:100% 0"><b>15 nov.</b>2019</div>
<div class="cell pv" style="left:255px;top:441.71px;line-height:8.8px;font-size:9.2px;transform:scaleX(0.848);transform-origin:0 0">GRUPO ALFEX CONSTRUCCIONES S.A. DE C.V.</div>
<div class="cell" style="left:489.5px;top:440.62px;font-size:9.9px;color:#666;transform:scaleX(0.845);transform-origin:0 0">Guadalajara</div>
<div class="cell" style="left:563px;top:440.79px;width:67.5px;text-align:center;font-size:9.7px;color:#666;transform:scaleX(0.845);transform-origin:50% 0">MXN</div>
<div class="cell mn" style="left:630.5px;top:440.62px;width:73px;font-size:9.9px;transform:scaleX(0.845);transform-origin:100% 0">$17,350.<s>18</s></div>
<div class="cell mn" style="left:708.5px;top:440.62px;width:73.5px;font-size:9.9px;transform:scaleX(0.845);transform-origin:100% 0">$2,776.<s>03</s></div>
<div class="cell mn" style="left:786.5px;top:440.62px;width:78px;text-align:center;font-size:9.9px;transform:scaleX(0.845);transform-origin:50% 0">$20,126.<s>21</s></div>
<div class="a" style="left:47px;top:227px;width:774px;height:1px;background:#eceef2"></div>
<div class="a" style="left:47px;top:254px;width:774px;height:1px;background:#eceef2"></div>
<div class="a" style="left:47px;top:281px;width:774px;height:1px;background:#eceef2"></div>
<div class="a" style="left:47px;top:306px;width:774px;height:1px;background:#eceef2"></div>
<div class="a" style="left:47px;top:331px;width:774px;height:1px;background:#eceef2"></div>
<div class="a" style="left:47px;top:358px;width:774px;height:1px;background:#eceef2"></div>
<div class="a" style="left:47px;top:383px;width:774px;height:1px;background:#eceef2"></div>
<div class="a" style="left:47px;top:410px;width:774px;height:1px;background:#eceef2"></div>
<div class="a" style="left:47px;top:437px;width:774px;height:1px;background:#eceef2"></div>
<div class="a" style="left:70px;top:200px;width:1px;height:263px;background:#eef0f3"></div>
<div class="a" style="left:117px;top:200px;width:1px;height:263px;background:#eef0f3"></div>
<div class="a" style="left:184px;top:200px;width:1px;height:263px;background:#eef0f3"></div>
<div class="a" style="left:250px;top:200px;width:1px;height:263px;background:#eef0f3"></div>
<div class="a" style="left:485.5px;top:200px;width:1px;height:263px;background:#eef0f3"></div>
<div class="a" style="left:563px;top:200px;width:1px;height:263px;background:#eef0f3"></div>
<div class="a" style="left:630.5px;top:200px;width:1px;height:263px;background:#eef0f3"></div>
<div class="a" style="left:708.5px;top:200px;width:1px;height:263px;background:#eef0f3"></div>
<div class="a" style="left:786.5px;top:200px;width:1px;height:263px;background:#eef0f3"></div>
<div class="a" style="left:821px;top:137px;width:163px;height:63px;background:#edf0f5"></div>
<div class="hd" style="left:828.5px;top:140.8px">Acciones</div>
<div class="a" style="left:821px;top:199px;width:155px;height:264px;background:#eceff3"></div>
<div class="a" style="left:976px;top:199px;width:8px;height:264px;background:#fff"></div>
<svg style="left:832px;top:208.7px" width="11" height="8"><path d="M0 0.5H3.5L4.5 1.5H8.5V3H2.3L0 7.5Z" fill="#245a9f"/><path d="M2.5 3.6H10.3L8.2 7.8H0.2Z" fill="#245a9f"/></svg>
<svg style="left:864px;top:209.7px" width="10" height="7"><rect x="0" y="0" width="9.3" height="7" fill="#245a9f"/><path d="M0.3 1.6L4.65 4.7L9 1.6" stroke="#dfe6f0" stroke-width="0.9" fill="none"/></svg>
<svg style="left:895.2px;top:209.2px" width="10" height="9"><path d="M5 1.1H0.6V7.8H7.6V4.5" fill="none" stroke="#7090bb" stroke-width="1"/><path d="M3.2 6.3L3.7 4.4L7.9 0.2L9.2 1.5L5 5.7Z" fill="#245a9f"/></svg>
<svg style="left:926.4px;top:208px" width="9" height="10"><path d="M0.6 0.6H5.5L7.8 2.9V9.1H0.6Z" fill="none" stroke="#5a7cae" stroke-width="1"/><path d="M5.5 0.6V2.9H7.8" fill="none" stroke="#5a7cae" stroke-width="0.7"/><rect x="2.4" y="5" width="3.6" height="2" fill="#5a7cae"/></svg>
<svg style="left:956.8px;top:208.8px" width="10" height="8"><rect x="2" y="0.5" width="5.2" height="2.6" fill="none" stroke="#245a9f" stroke-width="1"/><path d="M0 3.6Q0 2.8 0.8 2.8H8.4Q9.2 2.8 9.2 3.6V6.6H7.6V5.3H1.6V6.6H0Z" fill="#245a9f"/><rect x="2" y="5.6" width="5.2" height="1.9" fill="none" stroke="#245a9f" stroke-width="0.9"/></svg>
<svg style="left:832px;top:235.7px" width="11" height="8"><path d="M0 0.5H3.5L4.5 1.5H8.5V3H2.3L0 7.5Z" fill="#245a9f"/><path d="M2.5 3.6H10.3L8.2 7.8H0.2Z" fill="#245a9f"/></svg>
<svg style="left:864px;top:236.7px" width="10" height="7"><rect x="0" y="0" width="9.3" height="7" fill="#245a9f"/><path d="M0.3 1.6L4.65 4.7L9 1.6" stroke="#dfe6f0" stroke-width="0.9" fill="none"/></svg>
<svg style="left:895.2px;top:236.2px" width="10" height="9"><path d="M5 1.1H0.6V7.8H7.6V4.5" fill="none" stroke="#7090bb" stroke-width="1"/><path d="M3.2 6.3L3.7 4.4L7.9 0.2L9.2 1.5L5 5.7Z" fill="#245a9f"/></svg>
<svg style="left:926.4px;top:235px" width="9" height="10"><path d="M0.6 0.6H5.5L7.8 2.9V9.1H0.6Z" fill="none" stroke="#5a7cae" stroke-width="1"/><path d="M5.5 0.6V2.9H7.8" fill="none" stroke="#5a7cae" stroke-width="0.7"/><rect x="2.4" y="5" width="3.6" height="2" fill="#5a7cae"/></svg>
<svg style="left:956.8px;top:235.8px" width="10" height="8"><rect x="2" y="0.5" width="5.2" height="2.6" fill="none" stroke="#245a9f" stroke-width="1"/><path d="M0 3.6Q0 2.8 0.8 2.8H8.4Q9.2 2.8 9.2 3.6V6.6H7.6V5.3H1.6V6.6H0Z" fill="#245a9f"/><rect x="2" y="5.6" width="5.2" height="1.9" fill="none" stroke="#245a9f" stroke-width="0.9"/></svg>
<svg style="left:832px;top:262.7px" width="11" height="8"><path d="M0 0.5H3.5L4.5 1.5H8.5V3H2.3L0 7.5Z" fill="#245a9f"/><path d="M2.5 3.6H10.3L8.2 7.8H0.2Z" fill="#245a9f"/></svg>
<svg style="left:864px;top:263.7px" width="10" height="7"><rect x="0" y="0" width="9.3" height="7" fill="#245a9f"/><path d="M0.3 1.6L4.65 4.7L9 1.6" stroke="#dfe6f0" stroke-width="0.9" fill="none"/></svg>
<svg style="left:895.2px;top:263.2px" width="10" height="9"><path d="M5 1.1H0.6V7.8H7.6V4.5" fill="none" stroke="#7090bb" stroke-width="1"/><path d="M3.2 6.3L3.7 4.4L7.9 0.2L9.2 1.5L5 5.7Z" fill="#245a9f"/></svg>
<svg style="left:926.4px;top:262px" width="9" height="10"><path d="M0.6 0.6H5.5L7.8 2.9V9.1H0.6Z" fill="none" stroke="#5a7cae" stroke-width="1"/><path d="M5.5 0.6V2.9H7.8" fill="none" stroke="#5a7cae" stroke-width="0.7"/><rect x="2.4" y="5" width="3.6" height="2" fill="#5a7cae"/></svg>
<svg style="left:956.8px;top:262.8px" width="10" height="8"><rect x="2" y="0.5" width="5.2" height="2.6" fill="none" stroke="#245a9f" stroke-width="1"/><path d="M0 3.6Q0 2.8 0.8 2.8H8.4Q9.2 2.8 9.2 3.6V6.6H7.6V5.3H1.6V6.6H0Z" fill="#245a9f"/><rect x="2" y="5.6" width="5.2" height="1.9" fill="none" stroke="#245a9f" stroke-width="0.9"/></svg>
<svg style="left:832px;top:289.7px" width="11" height="8"><path d="M0 0.5H3.5L4.5 1.5H8.5V3H2.3L0 7.5Z" fill="#245a9f"/><path d="M2.5 3.6H10.3L8.2 7.8H0.2Z" fill="#245a9f"/></svg>
<svg style="left:864px;top:290.7px" width="10" height="7"><rect x="0" y="0" width="9.3" height="7" fill="#245a9f"/><path d="M0.3 1.6L4.65 4.7L9 1.6" stroke="#dfe6f0" stroke-width="0.9" fill="none"/></svg>
<svg style="left:895.2px;top:290.2px" width="10" height="9"><path d="M5 1.1H0.6V7.8H7.6V4.5" fill="none" stroke="#7090bb" stroke-width="1"/><path d="M3.2 6.3L3.7 4.4L7.9 0.2L9.2 1.5L5 5.7Z" fill="#245a9f"/></svg>
<svg style="left:926.4px;top:289px" width="9" height="10"><path d="M0.6 0.6H5.5L7.8 2.9V9.1H0.6Z" fill="none" stroke="#5a7cae" stroke-width="1"/><path d="M5.5 0.6V2.9H7.8" fill="none" stroke="#5a7cae" stroke-width="0.7"/><rect x="2.4" y="5" width="3.6" height="2" fill="#5a7cae"/></svg>
<svg style="left:956.8px;top:289.8px" width="10" height="8"><rect x="2" y="0.5" width="5.2" height="2.6" fill="none" stroke="#245a9f" stroke-width="1"/><path d="M0 3.6Q0 2.8 0.8 2.8H8.4Q9.2 2.8 9.2 3.6V6.6H7.6V5.3H1.6V6.6H0Z" fill="#245a9f"/><rect x="2" y="5.6" width="5.2" height="1.9" fill="none" stroke="#245a9f" stroke-width="0.9"/></svg>
<svg style="left:832px;top:314.7px" width="11" height="8"><path d="M0 0.5H3.5L4.5 1.5H8.5V3H2.3L0 7.5Z" fill="#245a9f"/><path d="M2.5 3.6H10.3L8.2 7.8H0.2Z" fill="#245a9f"/></svg>
<svg style="left:864px;top:315.7px" width="10" height="7"><rect x="0" y="0" width="9.3" height="7" fill="#245a9f"/><path d="M0.3 1.6L4.65 4.7L9 1.6" stroke="#dfe6f0" stroke-width="0.9" fill="none"/></svg>
<svg style="left:895.2px;top:315.2px" width="10" height="9"><path d="M5 1.1H0.6V7.8H7.6V4.5" fill="none" stroke="#7090bb" stroke-width="1"/><path d="M3.2 6.3L3.7 4.4L7.9 0.2L9.2 1.5L5 5.7Z" fill="#245a9f"/></svg>
<svg style="left:926.4px;top:314px" width="9" height="10"><path d="M0.6 0.6H5.5L7.8 2.9V9.1H0.6Z" fill="none" stroke="#5a7cae" stroke-width="1"/><path d="M5.5 0.6V2.9H7.8" fill="none" stroke="#5a7cae" stroke-width="0.7"/><rect x="2.4" y="5" width="3.6" height="2" fill="#5a7cae"/></svg>
<svg style="left:956.8px;top:314.8px" width="10" height="8"><rect x="2" y="0.5" width="5.2" height="2.6" fill="none" stroke="#245a9f" stroke-width="1"/><path d="M0 3.6Q0 2.8 0.8 2.8H8.4Q9.2 2.8 9.2 3.6V6.6H7.6V5.3H1.6V6.6H0Z" fill="#245a9f"/><rect x="2" y="5.6" width="5.2" height="1.9" fill="none" stroke="#245a9f" stroke-width="0.9"/></svg>
<svg style="left:832px;top:339.7px" width="11" height="8"><path d="M0 0.5H3.5L4.5 1.5H8.5V3H2.3L0 7.5Z" fill="#245a9f"/><path d="M2.5 3.6H10.3L8.2 7.8H0.2Z" fill="#245a9f"/></svg>
<svg style="left:864px;top:340.7px" width="10" height="7"><rect x="0" y="0" width="9.3" height="7" fill="#245a9f"/><path d="M0.3 1.6L4.65 4.7L9 1.6" stroke="#dfe6f0" stroke-width="0.9" fill="none"/></svg>
<svg style="left:895.2px;top:340.2px" width="10" height="9"><path d="M5 1.1H0.6V7.8H7.6V4.5" fill="none" stroke="#7090bb" stroke-width="1"/><path d="M3.2 6.3L3.7 4.4L7.9 0.2L9.2 1.5L5 5.7Z" fill="#245a9f"/></svg>
<svg style="left:926.4px;top:339px" width="9" height="10"><path d="M0.6 0.6H5.5L7.8 2.9V9.1H0.6Z" fill="none" stroke="#5a7cae" stroke-width="1"/><path d="M5.5 0.6V2.9H7.8" fill="none" stroke="#5a7cae" stroke-width="0.7"/><rect x="2.4" y="5" width="3.6" height="2" fill="#5a7cae"/></svg>
<svg style="left:956.8px;top:339.8px" width="10" height="8"><rect x="2" y="0.5" width="5.2" height="2.6" fill="none" stroke="#245a9f" stroke-width="1"/><path d="M0 3.6Q0 2.8 0.8 2.8H8.4Q9.2 2.8 9.2 3.6V6.6H7.6V5.3H1.6V6.6H0Z" fill="#245a9f"/><rect x="2" y="5.6" width="5.2" height="1.9" fill="none" stroke="#245a9f" stroke-width="0.9"/></svg>
<svg style="left:832px;top:366.7px" width="11" height="8"><path d="M0 0.5H3.5L4.5 1.5H8.5V3H2.3L0 7.5Z" fill="#245a9f"/><path d="M2.5 3.6H10.3L8.2 7.8H0.2Z" fill="#245a9f"/></svg>
<svg style="left:864px;top:367.7px" width="10" height="7"><rect x="0" y="0" width="9.3" height="7" fill="#245a9f"/><path d="M0.3 1.6L4.65 4.7L9 1.6" stroke="#dfe6f0" stroke-width="0.9" fill="none"/></svg>
<svg style="left:895.2px;top:367.2px" width="10" height="9"><path d="M5 1.1H0.6V7.8H7.6V4.5" fill="none" stroke="#7090bb" stroke-width="1"/><path d="M3.2 6.3L3.7 4.4L7.9 0.2L9.2 1.5L5 5.7Z" fill="#245a9f"/></svg>
<svg style="left:926.4px;top:366px" width="9" height="10"><path d="M0.6 0.6H5.5L7.8 2.9V9.1H0.6Z" fill="none" stroke="#5a7cae" stroke-width="1"/><path d="M5.5 0.6V2.9H7.8" fill="none" stroke="#5a7cae" stroke-width="0.7"/><rect x="2.4" y="5" width="3.6" height="2" fill="#5a7cae"/></svg>
<svg style="left:956.8px;top:366.8px" width="10" height="8"><rect x="2" y="0.5" width="5.2" height="2.6" fill="none" stroke="#245a9f" stroke-width="1"/><path d="M0 3.6Q0 2.8 0.8 2.8H8.4Q9.2 2.8 9.2 3.6V6.6H7.6V5.3H1.6V6.6H0Z" fill="#245a9f"/><rect x="2" y="5.6" width="5.2" height="1.9" fill="none" stroke="#245a9f" stroke-width="0.9"/></svg>
<svg style="left:832px;top:391.7px" width="11" height="8"><path d="M0 0.5H3.5L4.5 1.5H8.5V3H2.3L0 7.5Z" fill="#245a9f"/><path d="M2.5 3.6H10.3L8.2 7.8H0.2Z" fill="#245a9f"/></svg>
<svg style="left:864px;top:392.7px" width="10" height="7"><rect x="0" y="0" width="9.3" height="7" fill="#245a9f"/><path d="M0.3 1.6L4.65 4.7L9 1.6" stroke="#dfe6f0" stroke-width="0.9" fill="none"/></svg>
<svg style="left:895.2px;top:392.2px" width="10" height="9"><path d="M5 1.1H0.6V7.8H7.6V4.5" fill="none" stroke="#7090bb" stroke-width="1"/><path d="M3.2 6.3L3.7 4.4L7.9 0.2L9.2 1.5L5 5.7Z" fill="#245a9f"/></svg>
<svg style="left:926.4px;top:391px" width="9" height="10"><path d="M0.6 0.6H5.5L7.8 2.9V9.1H0.6Z" fill="none" stroke="#5a7cae" stroke-width="1"/><path d="M5.5 0.6V2.9H7.8" fill="none" stroke="#5a7cae" stroke-width="0.7"/><rect x="2.4" y="5" width="3.6" height="2" fill="#5a7cae"/></svg>
<svg style="left:956.8px;top:391.8px" width="10" height="8"><rect x="2" y="0.5" width="5.2" height="2.6" fill="none" stroke="#245a9f" stroke-width="1"/><path d="M0 3.6Q0 2.8 0.8 2.8H8.4Q9.2 2.8 9.2 3.6V6.6H7.6V5.3H1.6V6.6H0Z" fill="#245a9f"/><rect x="2" y="5.6" width="5.2" height="1.9" fill="none" stroke="#245a9f" stroke-width="0.9"/></svg>
<svg style="left:832px;top:418.7px" width="11" height="8"><path d="M0 0.5H3.5L4.5 1.5H8.5V3H2.3L0 7.5Z" fill="#245a9f"/><path d="M2.5 3.6H10.3L8.2 7.8H0.2Z" fill="#245a9f"/></svg>
<svg style="left:864px;top:419.7px" width="10" height="7"><rect x="0" y="0" width="9.3" height="7" fill="#245a9f"/><path d="M0.3 1.6L4.65 4.7L9 1.6" stroke="#dfe6f0" stroke-width="0.9" fill="none"/></svg>
<svg style="left:895.2px;top:419.2px" width="10" height="9"><path d="M5 1.1H0.6V7.8H7.6V4.5" fill="none" stroke="#7090bb" stroke-width="1"/><path d="M3.2 6.3L3.7 4.4L7.9 0.2L9.2 1.5L5 5.7Z" fill="#245a9f"/></svg>
<svg style="left:926.4px;top:418px" width="9" height="10"><path d="M0.6 0.6H5.5L7.8 2.9V9.1H0.6Z" fill="none" stroke="#5a7cae" stroke-width="1"/><path d="M5.5 0.6V2.9H7.8" fill="none" stroke="#5a7cae" stroke-width="0.7"/><rect x="2.4" y="5" width="3.6" height="2" fill="#5a7cae"/></svg>
<svg style="left:956.8px;top:418.8px" width="10" height="8"><rect x="2" y="0.5" width="5.2" height="2.6" fill="none" stroke="#245a9f" stroke-width="1"/><path d="M0 3.6Q0 2.8 0.8 2.8H8.4Q9.2 2.8 9.2 3.6V6.6H7.6V5.3H1.6V6.6H0Z" fill="#245a9f"/><rect x="2" y="5.6" width="5.2" height="1.9" fill="none" stroke="#245a9f" stroke-width="0.9"/></svg>
<svg style="left:832px;top:445.7px" width="11" height="8"><path d="M0 0.5H3.5L4.5 1.5H8.5V3H2.3L0 7.5Z" fill="#245a9f"/><path d="M2.5 3.6H10.3L8.2 7.8H0.2Z" fill="#245a9f"/></svg>
<svg style="left:864px;top:446.7px" width="10" height="7"><rect x="0" y="0" width="9.3" height="7" fill="#245a9f"/><path d="M0.3 1.6L4.65 4.7L9 1.6" stroke="#dfe6f0" stroke-width="0.9" fill="none"/></svg>
<svg style="left:895.2px;top:446.2px" width="10" height="9"><path d="M5 1.1H0.6V7.8H7.6V4.5" fill="none" stroke="#7090bb" stroke-width="1"/><path d="M3.2 6.3L3.7 4.4L7.9 0.2L9.2 1.5L5 5.7Z" fill="#245a9f"/></svg>
<svg style="left:926.4px;top:445px" width="9" height="10"><path d="M0.6 0.6H5.5L7.8 2.9V9.1H0.6Z" fill="none" stroke="#5a7cae" stroke-width="1"/><path d="M5.5 0.6V2.9H7.8" fill="none" stroke="#5a7cae" stroke-width="0.7"/><rect x="2.4" y="5" width="3.6" height="2" fill="#5a7cae"/></svg>
<svg style="left:956.8px;top:445.8px" width="10" height="8"><rect x="2" y="0.5" width="5.2" height="2.6" fill="none" stroke="#245a9f" stroke-width="1"/><path d="M0 3.6Q0 2.8 0.8 2.8H8.4Q9.2 2.8 9.2 3.6V6.6H7.6V5.3H1.6V6.6H0Z" fill="#245a9f"/><rect x="2" y="5.6" width="5.2" height="1.9" fill="none" stroke="#245a9f" stroke-width="0.9"/></svg>
<div class="a" style="left:39px;top:463px;width:961px;height:1px;background:#6b717c"></div>
<div class="a" style="left:40px;top:464px;width:960px;height:22px;background:#eceef3"></div>
<div class="a" style="left:39px;top:486px;width:961px;height:1px;background:#fff"></div>
<div class="a" style="left:39px;top:487px;width:961px;height:1px;background:#555b66"></div>
<div class="a" style="left:679.8px;top:463.6px;width:47px;height:23px;background:#10a5d5"></div>
<div class="a" style="left:726.8px;top:463.6px;width:273.2px;height:24.4px;background:#111b2d"></div>
<svg style="left:700.3px;top:470px" width="6" height="11"><circle cx="3" cy="1.4" r="1.35" fill="#e8fbff"/><path d="M0.6 4H4V8.6H5.6V10H0.4V8.6H1.9V5.4H0.6Z" fill="#e8fbff"/></svg>
<svg style="left:747px;top:468.8px" width="14" height="13"><ellipse cx="6.8" cy="6.4" rx="6.6" ry="6.3" fill="#f4f6fa"/><path d="M2.2 4.6H11.4" stroke="#111b2d" stroke-width="0.7"/><ellipse cx="4.6" cy="5.5" rx="2" ry="1.3" fill="#111b2d"/><ellipse cx="9" cy="5.5" rx="2" ry="1.3" fill="#111b2d"/><path d="M4.3 9Q7 10.8 9.6 8.6" stroke="#111b2d" stroke-width="0.9" fill="none"/></svg>
<svg style="left:801.5px;top:470.5px" width="14" height="10"><rect x="0" y="0" width="14" height="10" rx="2.5" fill="#fff"/><path d="M5.5 2.8V7.2L9 5Z" fill="#111b2d"/></svg>
<svg style="left:858px;top:472px" width="14" height="8"><rect x="0.5" y="0.5" width="13" height="7" fill="none" stroke="#fff" stroke-width="1"/><path d="M2 2.5H12M2 4H12M3 5.8H11" stroke="#fff" stroke-width="0.9" stroke-dasharray="1 0.6"/></svg>
<svg style="left:918.7px;top:471.5px" width="9" height="9"><circle cx="4.5" cy="4.5" r="3.7" fill="none" stroke="#fff" stroke-width="1.5"/><path d="M4.5 2.3V4.7H6.3" stroke="#fff" stroke-width="1"/></svg>
<div class="t" style="left:933.8px;top:471.4px;font-size:8.8px;font-weight:700;color:#f4f6fa;transform:scaleX(0.87);transform-origin:0 0">18 : 09 : 56</div>
</body></html>
